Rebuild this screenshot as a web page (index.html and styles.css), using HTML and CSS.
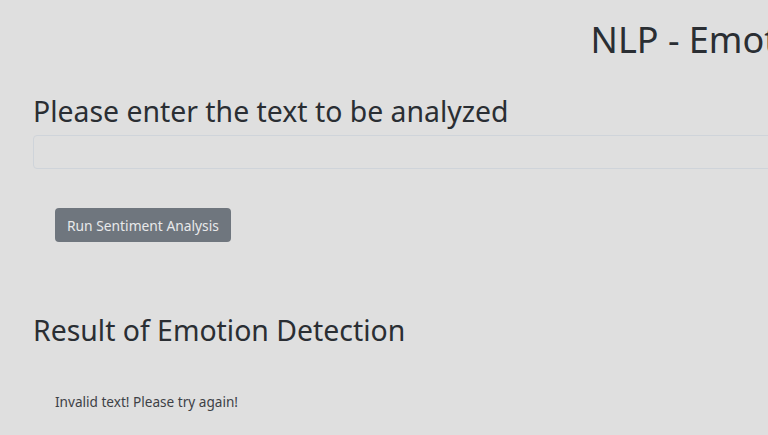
FILE: index.html
```html
<!DOCTYPE html>
<html lang="en">
<head>
<meta charset="utf-8">
<title>NLP - Emotion Detection</title>
<link rel="stylesheet" href="styles.css">
</head>
<body>
<div class="page">
  <h1 class="title">NLP - Emotion Detection</h1>
  <section class="entry">
    <h3 class="heading">Please enter the text to be analyzed</h3>
    <input class="text-input" type="text" aria-label="Text to analyze">
    <div class="actions">
      <button class="btn-run" type="button">Run Sentiment Analysis</button>
    </div>
  </section>
  <section class="result">
    <h3 class="heading">Result of Emotion Detection</h3>
    <p class="result-text">Invalid text! Please try again!</p>
  </section>
</div>
</body>
</html>
```
FILE: styles.css
```css
html, body {
  margin: 0;
  padding: 0;
  background: #dfdfdf;
  overflow: hidden;
}
body {
  font-family: "Noto Sans", "Open Sans", sans-serif;
  color: #2a2e33;
  width: 768px;
  height: 435px;
}
.page {
  width: 1594px;
  box-sizing: border-box;
  padding: 18px 33px 0 33px;
}
.title {
  margin: 0;
  font-size: 36px;
  font-weight: 400;
  line-height: 1.2;
  text-align: center;
}
.heading {
  margin: 0;
  font-size: 28.4px;
  font-weight: 400;
  line-height: 1.2;
}
.entry {
  margin-top: 33px;
  display: flex;
  flex-direction: column;
}
.text-input {
  margin-top: 7px;
  height: 34px;
  box-sizing: border-box;
  border: 1px solid #cfd4da;
  border-radius: 4px;
  background: transparent;
  width: 100%;
}
.actions {
  margin-top: 39px;
  padding-left: 22px;
  display: flex;
}
.btn-run {
  height: 34px;
  padding: 0 12px;
  border: none;
  border-radius: 4px;
  background: #6f767e;
  color: #e8e9ea;
  font-family: "Noto Sans", "Open Sans", sans-serif;
  font-size: 13.8px;
  display: flex;
  align-items: center;
}
.result {
  margin-top: 71px;
}
.result-text {
  margin: 45px 0 0 22px;
  font-size: 13.6px;
  line-height: 1.5;
  color: #3d4146;
}
```
